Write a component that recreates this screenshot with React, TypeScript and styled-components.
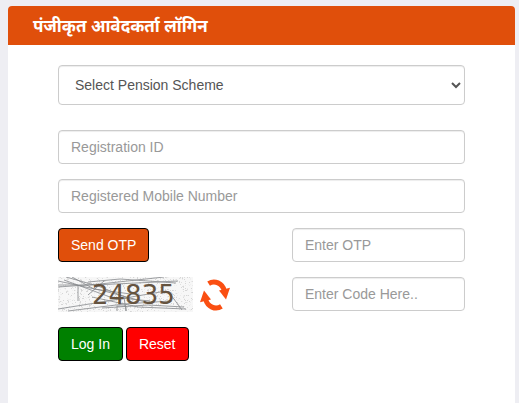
import React, { useState } from "react";
import styled, { createGlobalStyle } from "styled-components";

const GlobalStyle = createGlobalStyle`
  *, *::before, *::after { box-sizing: border-box; }
  body {
    margin: 0;
    background: #eeeef3;
    color: #333;
    font: 14px/20px "Liberation Sans", Arial, sans-serif;
  }
`;

const Page = styled.main`
  display: flex;
  min-height: 100vh;
  padding: 6px 4px 0 8px;
`;

const Panel = styled.section`
  flex: 1;
  min-width: 0;
  background: #fff;
  border-radius: 4px 4px 0 0;
`;

const PanelHeader = styled.header`
  padding: 12px 25px 7px;
  background: #e04f0b;
  border-radius: 4px 4px 0 0;
`;

const Title = styled.h1`
  margin: 0;
  color: #fff;
  font: bold 17px/20px "Noto Sans Devanagari", "Noto Sans", sans-serif;
`;

const Form = styled.form`
  display: flex;
  flex-direction: column;
  gap: 15px;
  padding: 20px 50px 42px;
`;

const Field = styled.input`
  display: block;
  width: 100%;
  height: 34px;
  padding: 6px 12px;
  border: 1px solid #ccc;
  border-radius: 4px;
  background: #fff;
  box-shadow: inset 0 1px 1px rgba(0, 0, 0, 0.075);
  color: #555;
  font: inherit;

  &::placeholder {
    color: #999;
    opacity: 1;
  }
`;

const SchemeSelect = styled.select`
  display: block;
  width: 100%;
  height: 40px;
  margin-bottom: 10px;
  padding: 6px 12px;
  border: 1px solid #ccc;
  border-radius: 4px;
  background: #fff;
  box-shadow: inset 0 1px 1px rgba(0, 0, 0, 0.075);
  color: #555;
  font: inherit;
`;

const SplitRow = styled.div`
  display: grid;
  grid-template-columns: minmax(0, 1fr) 173px;
  align-items: start;
  height: 34px;
`;

const Cluster = styled.div<{ $gap: number }>`
  display: flex;
  align-items: center;
  gap: ${({ $gap }) => $gap}px;
`;

const Button = styled.button<{ $color: string }>`
  height: 34px;
  padding: 6px 12px;
  border: 1px solid #000;
  border-radius: 4px;
  background: ${({ $color }) => $color};
  color: #fff;
  font: inherit;
  white-space: nowrap;
  cursor: pointer;
`;

const ButtonRow = styled(Cluster)`
  padding-top: 1px;
`;

const IconButton = styled.button`
  display: flex;
  padding: 0;
  border: 0;
  background: none;
  cursor: pointer;
`;

const CaptchaArt = styled.svg`
  display: block;
  flex: none;
`;

const scratches = [
  "M0 4 L46 14 L95 27",
  "M8 0 L40 9 L72 22",
  "M0 10 L42 7 L106 0",
  "M0 8 L36 8 L120 4",
  "M6 3 L52 20 L92 24",
  "M14 0 L36 12 L80 18",
  "M30 5 L62 2 L118 6",
  "M0 32 L50 24 L108 14",
  "M10 34 L66 27 L112 24",
  "M20 9 V24",
  "M34 20 L80 30 L128 32",
  "M44 31 L90 28 L126 30",
  "M59 34 V29 H68 V34",
  "M66 20 L68 34",
  "M110 14 L124 33",
  "M46 4 L30 18",
];

// Low-contrast grain behind the code, from a fixed pseudo-random sequence.
const specks = (() => {
  let seed = 71;
  const next = () => (seed = (seed * 16807) % 2147483647) / 2147483647;
  return Array.from({ length: 1100 }, () => ({
    x: Math.floor(next() * 135),
    y: Math.floor(next() * 35),
    shade: ["#ebebeb", "#dedede", "#f0f0f0", "#d6d6d6"][Math.floor(next() * 4)],
  }));
})();

function Captcha({ code }: { code: string }) {
  return (
    <CaptchaArt width="135" height="35" viewBox="0 0 135 35" role="img" aria-label="Captcha">
      <rect width="135" height="35" fill="#f7f7f7" />
      {specks.map((s, i) => (
        <rect key={i} x={s.x} y={s.y} width="1" height="1" fill={s.shade} />
      ))}
      <g fill="none" stroke="#85888b" strokeWidth="0.8">
        {scratches.map((d) => (
          <path key={d} d={d} />
        ))}
      </g>
      <text x="34" y="27" fill="#65533f" fontFamily="DejaVu Sans, sans-serif" fontSize="26">
        {code}
      </text>
    </CaptchaArt>
  );
}

function RefreshIcon() {
  return (
    <svg width="30" height="32" viewBox="0 0 30 32" aria-hidden="true">
      <g fill="none" stroke="#fa4f12" strokeWidth="5">
        <path d="M8.6 4.6 C14.5 0.8 22.5 4 24.4 12" />
        <path d="M21.4 27.4 C15.5 31.2 7.5 28 5.6 20" />
      </g>
      <path d="M19 11.4 L30 8.8 L26 20.6 Z" fill="#fa4f12" />
      <path d="M11 20.6 L0 23.2 L4 11.4 Z" fill="#fa4f12" />
    </svg>
  );
}

export default function App() {
  const [scheme, setScheme] = useState("");
  return (
    <>
      <GlobalStyle />
      <Page>
        <Panel>
          <PanelHeader>
            <Title lang="hi">पंजीकृत आवेदकर्ता लॉगिन</Title>
          </PanelHeader>
          <Form onSubmit={(e) => e.preventDefault()}>
            <SchemeSelect
              aria-label="Pension scheme"
              value={scheme}
              onChange={(e) => setScheme(e.target.value)}
            >
              <option value="">Select Pension Scheme</option>
            </SchemeSelect>
            <Field aria-label="Registration ID" placeholder="Registration ID" />
            <Field type="tel" aria-label="Registered Mobile Number" placeholder="Registered Mobile Number" />
            <SplitRow>
              <Cluster $gap={0}>
                <Button type="button" $color="#e04f0b">Send OTP</Button>
              </Cluster>
              <Field aria-label="Enter OTP" placeholder="Enter OTP" />
            </SplitRow>
            <SplitRow>
              <Cluster $gap={7}>
                <Captcha code="24835" />
                <IconButton type="button" aria-label="Refresh code">
                  <RefreshIcon />
                </IconButton>
              </Cluster>
              <Field aria-label="Enter Code Here" placeholder="Enter Code Here.." />
            </SplitRow>
            <ButtonRow $gap={3}>
              <Button type="submit" $color="#008000">Log In</Button>
              <Button type="reset" $color="#ff0000">Reset</Button>
            </ButtonRow>
          </Form>
        </Panel>
      </Page>
    </>
  );
}
